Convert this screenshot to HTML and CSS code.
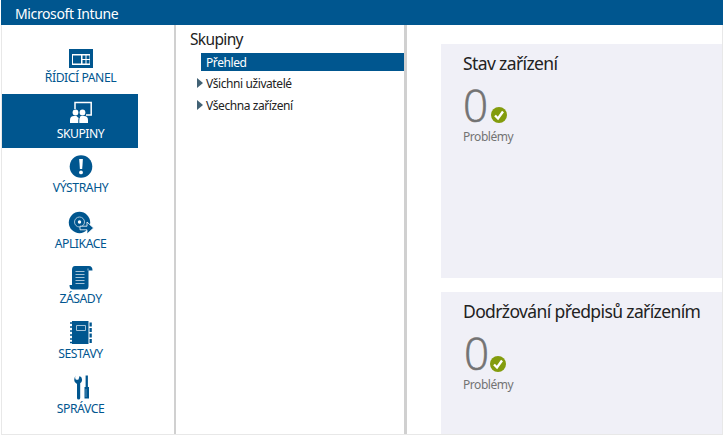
FILE: index.html
```html
<!DOCTYPE html>
<html lang="cs">
<head>
<meta charset="utf-8">
<title>Microsoft Intune</title>
<link rel="stylesheet" href="styles.css">
</head>
<body>
<div class="window">
  <header class="topbar">Microsoft Intune</header>
  <div class="body">
    <nav class="nav">
      <a class="item tall"><svg class="icon" viewBox="0 0 24 24"><path fill-rule="evenodd" d="M0 4h24v19H0zM3 9v11h18V9z"/><path d="M4 10.500h8v8H4zM13.500 10.500h3v3.500h-3zM17.500 10.500h3v3.500h-3zM13.500 15h3v3.500h-3zM17.500 15h3v3.500h-3z"/></svg><span class="label">ŘÍDICÍ PANEL</span></a>
      <a class="item active"><svg class="icon" viewBox="0 0 24 24"><path class="line" d="M6 8V1.500h16.200V14H17"/><circle cx="6.500" cy="11.500" r="2.900"/><circle cx="13.500" cy="11.500" r="2.900"/><path d="M1 22v-3q0-4 4-4h2.500l2 2 2-2H15q4 0 4 4v3z"/><path class="cut" d="M9.800 22v-3q0-2 1.200-3.500"/></svg><span class="label">SKUPINY</span></a>
      <a class="item tall"><svg class="icon" viewBox="0 0 24 24"><circle cx="12" cy="11.500" r="11.300"/><path class="white" d="M10.200 4h3.700l-.7 10h-2.300z"/><circle class="white" cx="12" cy="17.400" r="1.900"/></svg><span class="label">VÝSTRAHY</span></a>
      <a class="item"><svg class="icon" viewBox="0 0 24 24"><circle cx="10.500" cy="11.500" r="10.700"/><circle class="hair thin" cx="10.500" cy="11" r="5"/><circle class="white" cx="10.500" cy="11" r="1.700"/><path class="edge" d="M11 15.200h7v-4.200l6.500 6-6.500 6v-4.200h-7z"/></svg><span class="label">APLIKACE</span></a>
      <a class="item"><svg class="icon" viewBox="0 0 24 24"><path d="M6 0h14q3.500 0 3.500 4.500H19.500V20q0 3.500-3 3.500H4Q.5 23.500.5 19H3V4q0-4 3-4z"/><path class="hair thin" d="M6.500 5.500h9M6.500 8.500h9M6.500 11.500h9M6.500 14.500h9M6.500 17.500h9M19 4.500V2.500"/></svg><span class="label">ZÁSADY</span></a>
      <a class="item"><svg class="icon" viewBox="0 0 24 24"><path d="M3 0h16.500v23H3z"/><path class="hair thin" d="M7.500 4.500h9v5h-9z"/><path d="M20.500 1.500h2.300v4h-2.300zM20.500 7h2.300v4h-2.300zM20.500 12.500h2.300v4h-2.300zM20.500 18h2.300v4h-2.300z"/><path class="rings" d="M1 2h3M1 6h3M1 10h3M1 14h3M1 18h3M1 21.500h3"/></svg><span class="label">SESTAVY</span></a>
      <a class="item"><svg class="icon" viewBox="0 0 24 24"><path d="M7 -.5Q5.400 1 6.500 3.200q1.800 1.200 3 .2L10.600 0Q13.200 1 13.100 4q-.2 2.200-1.900 3.200V22q0 1.500-1.600 1.500T8 22V8Q5.200 6.900 5.200 4 5.200 1 7-.5zM16.600-.5h2.300V11h1.100v11.500H15.500V11h1.100z"/><path class="groove" d="M17 13v8"/></svg><span class="label">SPRÁVCE</span></a>
    </nav>
    <section class="groups">
      <h2 class="heading">Skupiny</h2>
      <div class="row selected"><span>Přehled</span></div>
      <div class="row"><svg class="arrow" viewBox="0 0 6 10"><path d="M0 0l6 5-6 5z"/></svg><span>Všichni uživatelé</span></div>
      <div class="row"><svg class="arrow" viewBox="0 0 6 10"><path d="M0 0l6 5-6 5z"/></svg><span>Všechna zařízení</span></div>
    </section>
    <main class="main">
      <article class="card">
        <h3 class="title">Stav zařízení</h3>
        <div class="count"><span class="zero">0</span><svg class="ok" viewBox="0 0 16 16"><circle cx="8" cy="8" r="8"/><path d="M4 8.500l3 3L12 4.500"/></svg></div>
        <p class="caption">Problémy</p>
      </article>
      <article class="card second">
        <h3 class="title">Dodržování předpisů zařízením</h3>
        <div class="count"><span class="zero">0</span><svg class="ok" viewBox="0 0 16 16"><circle cx="8" cy="8" r="8"/><path d="M4 8.500l3 3L12 4.500"/></svg></div>
        <p class="caption">Problémy</p>
      </article>
    </main>
  </div>
</div>
</body>
</html>
```
FILE: styles.css
```css
* { box-sizing: border-box; }
body { margin: 0; background: #fff; font-family: "Noto Sans", "Open Sans", sans-serif; overflow: hidden; }
.window { width: 722px; height: 435px; margin-left: 1px; border: 1px solid #e8e8e8; border-top: 0; display: flex; flex-direction: column; }
.topbar { height: 25px; margin: 0 -1px; padding-left: 14px; background: #00568f; color: #fff; font-size: 14px; line-height: 28px; letter-spacing: -.38px; white-space: nowrap; }
.body { flex: 1; display: flex; min-height: 0; }
h2, h3, p { margin: 0; font-weight: 400; white-space: nowrap; }

.nav { width: 174px; padding-top: 13px; border-right: 2px solid #d0d0d0; }
.item { display: flex; flex-direction: column; align-items: center; width: 136px; height: 55px; padding: 7px 0 0 22px; color: #00568f; }
.item.tall { height: 56px; }
.item.active { height: 54px; background: #00568f; color: #fff; }
.icon { width: 24px; height: 24px; fill: currentColor; flex: none; overflow: visible; }
.icon .line { fill: none; stroke: currentColor; stroke-width: 1.5; }
.icon .cut { fill: none; stroke: #00568f; stroke-width: 1; }
.icon .white { fill: #fff; }
.icon .hair { fill: none; stroke: #fff; stroke-width: .9; }
.icon .thin { stroke: #b5cee0; }
.icon .edge { stroke: #fff; stroke-width: .8; }
.icon .rings { stroke: currentColor; stroke-width: 1.5; }
.icon .groove { stroke: #7ba5c2; stroke-width: .7; }
.label { margin: 1px 1px 0 0; font-size: 12.200px; line-height: 16px; white-space: nowrap; letter-spacing: -.45px; }

.groups { width: 231px; padding-top: 2px; border-right: 3px solid #d0d0d0; }
.heading { padding-left: 14px; font-size: 15.500px; line-height: 24px; color: #222; letter-spacing: -.65px; }
.row { display: flex; align-items: center; height: 22px; padding-left: 21px; gap: 3px; font-size: 12px; color: #222; white-space: nowrap; letter-spacing: -.42px; }
.row.selected { height: 18px; margin: 2px 0 1px 25px; padding-left: 5px; background: #00568f; color: #fff; }
.arrow { width: 6px; height: 10px; fill: #426275; }

.main { flex: 1; padding: 19px 0 0 34px; min-width: 0; }
.card { height: 234px; padding: 6px 0 0 22px; background: #f0f0f7; color: #222; }
.card.second { height: 142px; margin-top: 14px; }
.title { font-size: 17.500px; line-height: 26px; letter-spacing: -.62px; }
.count { display: flex; align-items: flex-end; height: 48px; }
.zero { font-family: "Open Sans", sans-serif; font-weight: 300; font-size: 44px; line-height: 38px; color: #737373; -webkit-text-stroke: .6px #737373; }
.ok { width: 16px; height: 16px; margin: 0 0 1px 3px; fill: #839c0d; }
.second .zero { margin-left: 1px; }
.second .ok { margin: 0 0 0 1px; }
.ok path { fill: none; stroke: #fff; stroke-width: 2.4; }
.caption { font-size: 12px; line-height: 16px; margin-top: 5px; color: #737373; letter-spacing: -.45px; }
```
